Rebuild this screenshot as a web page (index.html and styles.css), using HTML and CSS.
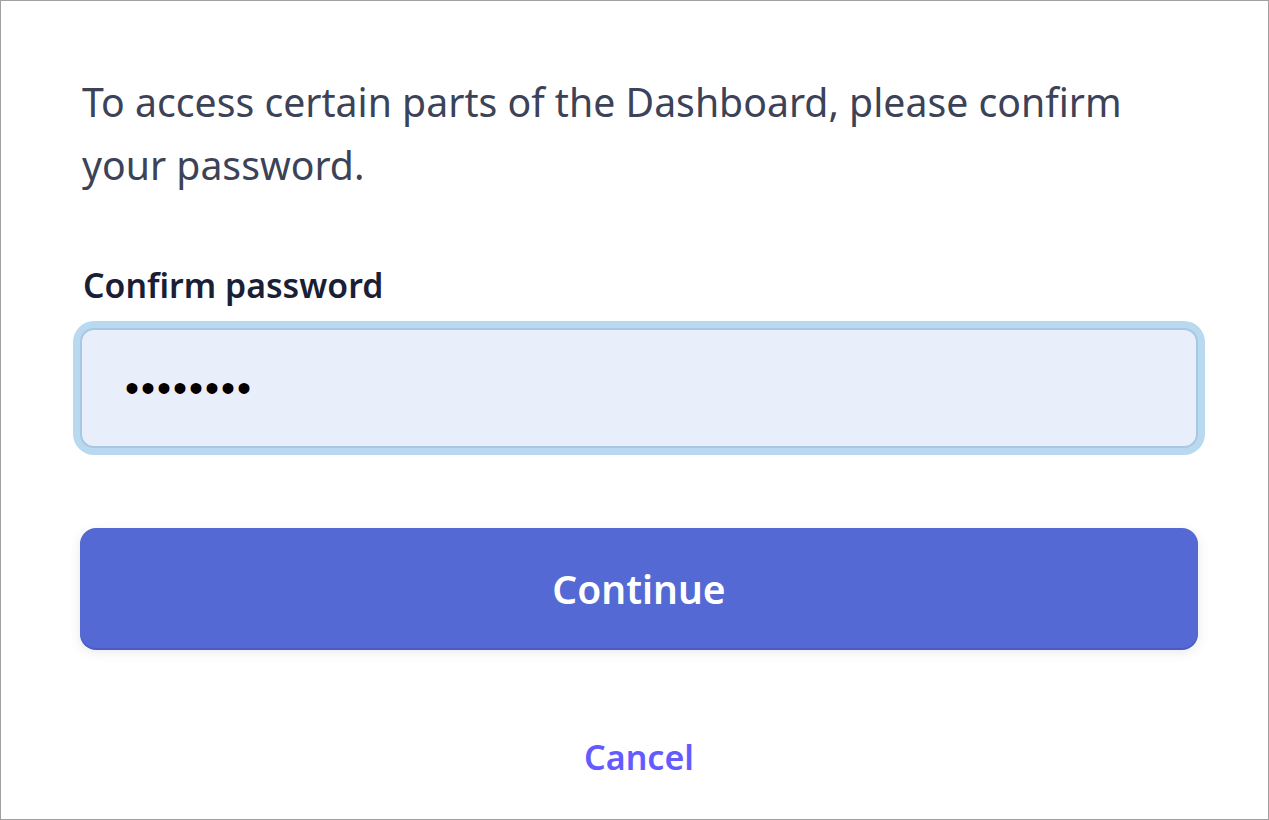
FILE: index.html
```html
<!DOCTYPE html>
<html lang="en">
<head>
  <meta charset="UTF-8" />
  <meta name="viewport" content="width=device-width, initial-scale=1.0"/>
  <title>Confirm password</title>
  <link rel="stylesheet" href="styles.css">
</head>
<body>
  <div class="frame">
    <p class="intro">To access certain parts of the Dashboard, please confirm your password.</p>
    <form class="confirm-form" onsubmit="return false">
      <label class="field-label" for="password">Confirm password</label>
      <input class="field-input" id="password" type="password" value="password">
      <button class="btn-primary" type="submit">Continue</button>
      <a class="cancel-link" href="#">Cancel</a>
    </form>
  </div>
</body>
</html>
```

FILE: styles.css
```css
* {
  box-sizing: border-box;
}
html, body {
  margin: 0;
  height: 100%;
}
body {
  font-family: 'Noto Sans', 'Open Sans', sans-serif;
  background: #fff;
}
.frame {
  height: 820px;
  border: 1px solid #a0a0a0;
  padding: 69px 70px 0 79px;
}
.intro {
  margin: 0 0 0 2px;
  font-size: 39.2px;
  line-height: 63px;
  color: #3c4257;
  max-width: 1060px;
}
.confirm-form {
  display: flex;
  flex-direction: column;
}
.field-label {
  margin: 65px 0 0 3px;
  font-size: 33.8px;
  font-weight: 600;
  line-height: 48px;
  color: #1a1f36;
}
.field-input {
  margin-top: 19px;
  height: 120px;
  padding: 0 43px;
  font-size: 40px;
  background: #e8effb;
  border: 2px solid #a8c8e2;
  border-radius: 14px;
  box-shadow: 0 0 0 7px #b9d9f0;
  color: #000;
  outline: none;
  letter-spacing: 2px;
}
.btn-primary {
  margin-top: 80px;
  height: 120px;
  border: none;
  border-radius: 16px;
  background: #5469d4;
  color: #fff;
  font-family: inherit;
  font-size: 39px;
  font-weight: 600;
  box-shadow: 0 2px 0 #4a5cc4, 0 4px 12px rgba(60, 66, 87, 0.12);
  cursor: pointer;
}
.cancel-link {
  margin-top: 86px;
  align-self: center;
  font-size: 34px;
  font-weight: 600;
  color: #635bff;
  text-decoration: none;
}
```
